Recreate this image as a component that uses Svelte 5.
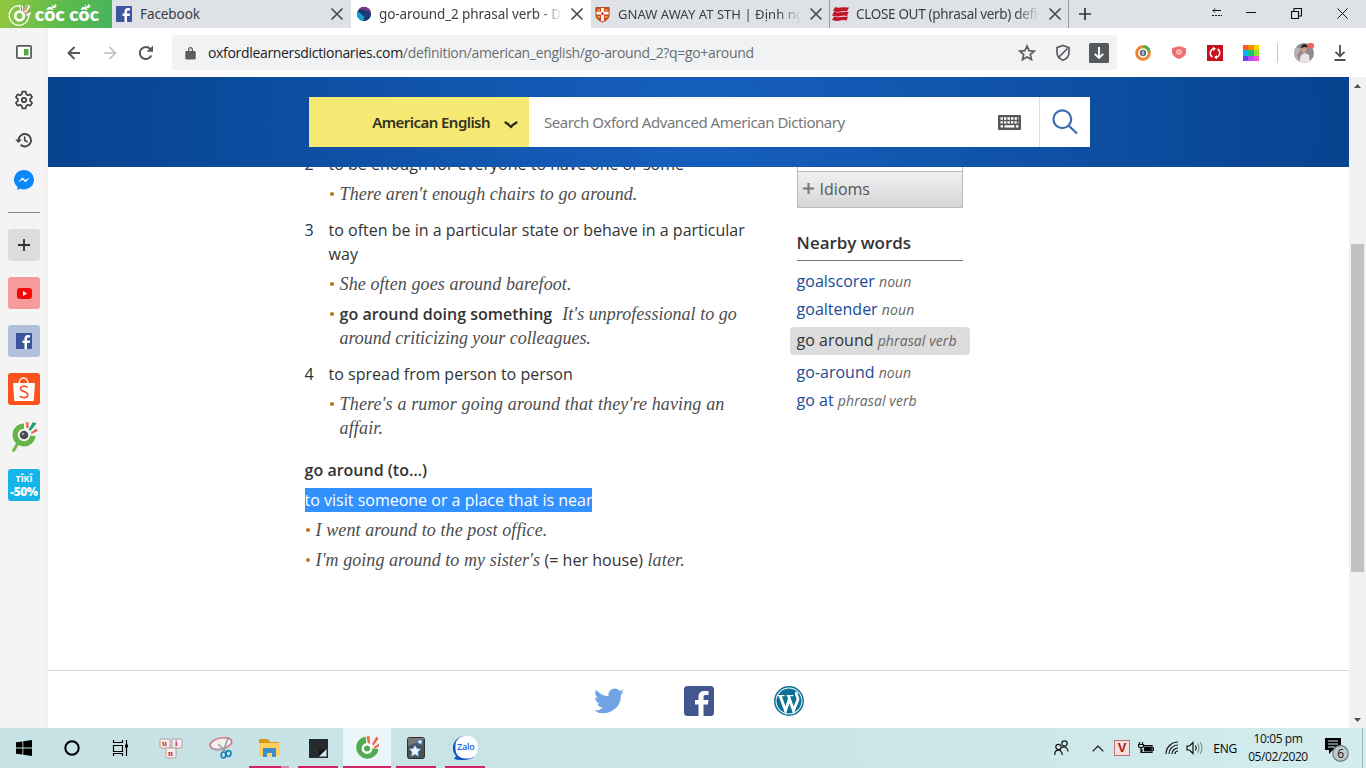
<script>
  const nearby = [
    { word: 'goalscorer', pos: 'noun' },
    { word: 'goaltender', pos: 'noun' },
    { word: 'go around', pos: 'phrasal verb', current: true },
    { word: 'go-around', pos: 'noun' },
    { word: 'go at', pos: 'phrasal verb' }
  ];
  const swatches = ['#ff5a1f', '#ff8a00', '#ffd000', '#00b8f5', '#19c37d', '#8be02c', '#6a3df5', '#b44df5', '#f04de0'];
</script>

{#snippet cross()}
  <svg class="cross" width="14" height="14" viewBox="0 0 14 14"><path d="M1.500 1.500l11 11M12.500 1.500l-11 11" fill="none" stroke="#45474a" stroke-width="1.600" /></svg>
{/snippet}

{#snippet fbmark(size, color)}
  <svg width={size} height={size} viewBox="0 0 32 32"><rect width="32" height="32" rx="1.500" fill={color} /><path d="M17 32V20h-4v-5h4v-4c0-4.500 2.500-7 7-7h4v5h-3c-2 0-3 .8-3 2.600V15h6l-.8 5H22v12z" fill="#fff" /></svg>
{/snippet}

<div class="screen">
  <div class="tabs">
    <div class="brand">
      <svg width="25" height="25" viewBox="0 0 25 25">
        <path d="M13.500 4A9.800 9.800 0 1 0 20.800 13" fill="none" stroke="#fff" stroke-width="1.200" />
        <circle cx="11.500" cy="14" r="4.300" fill="none" stroke="#fff" stroke-width="2.800" />
        <path d="M11 4h4v6h-2zM16 9l3-6 3.500 1-4.500 7zM18 12l4-3 1 3-4 2z" fill="#fff" />
        <path d="M13 4.500l1.200 4.500M19.800 4l-2.600 5M22 9l-3.500 2.500" stroke="#e8644e" stroke-width="1.200" />
      </svg>
      <span>cốc cốc</span>
      <svg class="rays" width="44" height="5" viewBox="0 0 44 5"><path d="M2 1l1.500 3M5.500 0l-.5 4M35 1l1.500 3M38.500 0l-.5 4" stroke="#fff" stroke-width=".9" /></svg>
    </div>
    <div class="tab">{@render fbmark(16, '#3d57a0')}<span class="title w1">Facebook</span>{@render cross()}</div>
    <div class="tab active">
      <svg width="16" height="16" viewBox="0 0 16 16"><circle cx="8" cy="8" r="7" fill="#0e3c70" /><path d="M1.500 5A7 7 0 0 0 7 14.900L8.500 11z" fill="#17a0d0" /><path d="M2.500 3.500A7 7 0 0 1 15 8q-5-5-12.500-4.500z" fill="#7b3580" /><path d="M7 4q6 1 8 4-1 5-6 7z" fill="#1c3a78" /></svg>
      <span class="title w2">go-around_2 phrasal verb - Definition</span>{@render cross()}
    </div>
    <div class="tab">
      <svg width="15" height="17" viewBox="0 0 16 17"><path d="M1 1h14v8c0 4-3 6-7 7.500C4 15 1 13 1 9z" fill="#d9491e" /><path d="M8 1v15M1 7h14" stroke="#fff" stroke-width="3" /><path d="M3 3h2v2H3zM11 3h2v2h-2zM3 10h2v2H3zM11 10h2v2h-2z" fill="#f4b63c" /><path d="M7 6h2v3H7z" fill="#c22" /><path d="M1 1h14v8c0 4-3 6-7 7.500C4 15 1 13 1 9z" fill="none" stroke="#a94a27" /></svg>
      <span class="title w3">GNAW AWAY AT STH | Định nghĩa</span>{@render cross()}
    </div>
    <div class="tab sep last">
      <svg width="17" height="14" viewBox="0 0 17 14"><path d="M3 0q3 1 5 .5T17 .5L15 4.500q-4-1-6.500 0T1 4zM2 4.800q3 1 5.500.5T16.500 5L15 9q-4-1-6.500 0T0 8.500zM2 9.500q3 1 5.500.5t8.500-.3L14.500 13.500q-4-1-6.500 0T0 13z" fill="#c4152b" /></svg>
      <span class="title w4">CLOSE OUT (phrasal verb) definition</span>{@render cross()}
    </div>
    <div class="newtab sep"><svg width="12" height="12" viewBox="0 0 12 12"><path d="M6 0v12M0 6h12" stroke="#333" stroke-width="1.700" /></svg></div>
    <div class="winbtns">
      <svg width="12" height="10" viewBox="0 0 12 10"><path d="M10 2.500H2M4 .5L2 2.500l2 2" fill="none" stroke="#111" /><path d="M1 7.500h10" stroke="#111" stroke-dasharray="2 1" /></svg>
      <svg width="10" height="10" viewBox="0 0 10 10"><path d="M0 4.500h10" stroke="#111" /></svg>
      <svg width="11" height="11" viewBox="0 0 11 11"><path d="M.5 3.500h7v7h-7zM3 3.500V.5h7.500v7.500h-3" fill="none" stroke="#111" stroke-width="1.200" /></svg>
      <svg width="11" height="11" viewBox="0 0 11 11"><path d="M.5.5l10 10M10.500.5l-10 10" stroke="#111" /></svg>
    </div>
  </div>

  <div class="body">
    <aside class="rail">
      <svg class="panel" width="16" height="14" viewBox="0 0 16 14"><rect x=".9" y=".9" width="14.200" height="12.200" rx="1.200" fill="#fff" stroke="#525657" stroke-width="1.700" /><path d="M8 4h4.500v6.500H8z" fill="#4dab40" /></svg>
      <svg class="gear" width="20" height="20" viewBox="0 0 24 24"><path d="M10 2h4l.7 3 2 1.200 3-.9 2 3.400L19.400 11v2l2.300 2.300-2 3.400-3-.9-2 1.200-.7 3h-4l-.7-3-2-1.200-3 .9-2-3.400L4.600 13v-2L2.300 8.700l2-3.400 3 .9 2-1.200z" fill="none" stroke="#424547" stroke-width="2.100" stroke-linejoin="round" /><circle cx="12" cy="12" r="2.600" fill="none" stroke="#424547" stroke-width="2.200" /></svg>
      <svg class="history" width="18" height="16" viewBox="0 0 18 16"><path d="M3.600 8a6.200 6.200 0 1 1 2 4.800" fill="none" stroke="#424547" stroke-width="1.900" /><path d="M.3 7.500h6.500L3.500 11z" fill="#424547" /><path d="M9.700 4.400V8.400l3 1.600" fill="none" stroke="#424547" stroke-width="1.600" /></svg>
      <svg class="msgr" width="20" height="20" viewBox="0 0 20 20"><path d="M10 0a10 9.700 0 1 1-3.500 18.800L3.500 20v-3A10 9.700 0 0 1 10 0z" fill="#0b87f8" /><path d="M4 12.300l4.500-4.800 2.600 2.600L16 7.500l-4.500 4.800-2.700-2.500z" fill="#fff" /></svg>
      <hr />
      <div class="tile plus"><svg width="12" height="12" viewBox="0 0 12 12"><path d="M6 0v12M0 6h12" stroke="#303234" stroke-width="1.800" /></svg></div>
      <div class="tile yt"><svg width="15" height="11" viewBox="0 0 15 11"><rect width="15" height="11" rx="3" fill="#f60808" /><path d="M6 3l4 2.500L6 8z" fill="#fff" /></svg></div>
      <div class="tile fb">{@render fbmark(16, '#3b559c')}</div>
      <div class="tile shop"><svg width="24" height="26" viewBox="0 0 24 26"><path d="M7 8c0-8 9-8 9 0" fill="none" stroke="#fff" stroke-width="1.500" /><path d="M1 7h22l-1.300 18H2.300z" fill="#fff" /><path d="M15.500 11.500c-2-2-7-1.800-7 1.200 0 3.500 7.200 2.200 7.200 6 0 3.500-5.200 3.800-8 1.300" fill="none" stroke="#f25124" stroke-width="1.600" /></svg></div>
      <svg class="cc" width="28" height="33" viewBox="0 0 28 33"><path d="M8 23L3 31.500" stroke="#76b845" stroke-width="3" /><path d="M14 3.500A11.500 11.500 0 1 0 25.500 16L14 15z" fill="#65b44a" /><circle cx="14" cy="15" r="6.200" fill="#f5f5f5" /><path d="M16.500 8l-.5-6 2.500.5V8z" fill="#ef5b43" /><path d="M18.500 9.500L23 2l3.500 1.500L20.500 11z" fill="#25a36e" /><path d="M21 12.500l5.500-4 1 2.500-6 3z" fill="#ef5b43" /><circle cx="14" cy="15" r="4.300" fill="#4b4d52" /><circle cx="13" cy="14" r="1.300" fill="#999" /></svg>
      <div class="tile tiki"><span class="tk">TÎKÎ</span><span class="off">-50%</span></div>
    </aside>

    <section class="browser">
      <div class="toolbar">
        <svg class="nav" width="14" height="14" viewBox="0 0 14 14"><path d="M13 7H2M7.500 1L1.500 7l6 6" fill="none" stroke="#55585b" stroke-width="1.900" /></svg>
        <svg class="nav" width="14" height="14" viewBox="0 0 14 14"><path d="M1 7h11M6.500 1l6 6-6 6" fill="none" stroke="#bcbec0" stroke-width="1.700" /></svg>
        <svg class="reload" width="16" height="16" viewBox="0 0 16 16"><path d="M13.300 10.500A6 6 0 1 1 12.300 4" fill="none" stroke="#55585b" stroke-width="2" /><path d="M15 .5v6.300H8.700z" fill="#55585b" /></svg>
        <div class="address">
          <svg width="11" height="14" viewBox="0 0 11 14"><path d="M1.500 5H3V3.500a2.500 2.500 0 0 1 5 0V5h1.500A1.200 1.200 0 0 1 10.700 6v6.500a1 1 0 0 1-1 1H1.300a1 1 0 0 1-1-1V6a1 1 0 0 1 1.200-1zM4.300 5h2.400V3.500a1.200 1.200 0 0 0-2.400 0z" fill="#5b5e61" /></svg>
          <span class="url"><b>oxfordlearnersdictionaries.com</b>/definition/american_english/go-around_2?q=go+around</span>
          <svg class="star" width="18" height="18" viewBox="0 0 18 18"><path d="M9 2l2.100 4.700 5.100.5-3.900 3.400 1.200 5L9 13l-4.500 2.600 1.200-5-3.900-3.400 5.100-.5z" fill="none" stroke="#5b5e61" stroke-width="1.700" /></svg>
          <svg class="shield" width="16" height="18" viewBox="0 0 16 18"><path d="M8 1.500l6 2.200v5c0 3.500-2.500 6-6 7.600-3.500-1.600-6-4.100-6-7.600v-5zM4 13L12.500 4.500" fill="none" stroke="#5b5e61" stroke-width="1.700" /></svg>
          <svg class="dl" width="20" height="20" viewBox="0 0 20 20"><rect width="20" height="20" rx="1.500" fill="#56595b" /><path d="M10 4v11M5.800 10.800L10 15l4.200-4.200" fill="none" stroke="#fff" stroke-width="1.900" /></svg>
        </div>
        <div class="ext">
          <svg width="16" height="16" viewBox="0 0 16 16"><circle cx="8" cy="8" r="6.300" fill="none" stroke="#f0852d" stroke-width="3" /><path d="M8.500 1.500a6.400 6.400 0 0 1 5.700 5" fill="none" stroke="#4caf50" stroke-width="3" /><circle cx="8" cy="8" r="3.200" fill="#5b7185" /><path d="M8 6v4" stroke="#fff" /></svg>
          <svg width="14" height="13" viewBox="0 0 14 15" preserveAspectRatio="none"><path d="M7 0l7 2.500v4.500c0 4-3 6.500-7 8-4-1.500-7-4-7-8V2.500z" fill="#ee6f72" /><circle cx="7" cy="7" r="2.500" fill="none" stroke="#fff" stroke-width=".9" /><path d="M5.300 5.300l3.400 3.400" stroke="#fff" stroke-width=".9" /></svg>
          <svg width="16" height="16" viewBox="0 0 16 16"><rect width="16" height="16" fill="#c9101c" /><path d="M5.500 12A4.600 4.600 0 0 1 6.500 3.700M10.500 4a4.600 4.600 0 0 1-1 8.300" fill="none" stroke="#fff" stroke-width="1.500" /><path d="M6 1.500l3 2.300-3 2.300zM10 10l-3 2.300 3 2.300z" fill="#fff" /></svg>
          <div class="swatches">{#each swatches as c}<i style="background:{c}"></i>{/each}</div>
          <span class="divider"></span>
          <svg class="avatar" width="20" height="20" viewBox="0 0 20 20"><defs><clipPath id="face"><circle cx="10" cy="10" r="10" /></clipPath></defs><g clip-path="url(#face)"><rect width="20" height="20" fill="#918b8d" /><path d="M0 3l7 3-4 6 3 8H0z" fill="#b9b3b6" /><path d="M5 20l2-8 4-2 4 2 1 8z" fill="#e9e5e4" /><ellipse cx="10" cy="6.500" rx="2.500" ry="3.500" fill="#c99f8c" /><path d="M7 5c0-5 7-5 6.500-.5L11 4z" fill="#23201f" /></g><rect x="13.500" y="0" width="6.500" height="5.500" rx="2" fill="#ee6464" /></svg>
          <svg class="tray" width="12" height="16" viewBox="0 0 12 16"><path d="M6 0v11M1.500 6.800L6 11.300l4.500-4.500M.5 15h11" fill="none" stroke="#4c4f52" stroke-width="1.800" /></svg>
        </div>
      </div>

      <div class="viewport">
        <div class="page">
          <header>
            <div class="search">
              <div class="dict"><span>American English</span><svg width="14" height="8" viewBox="0 0 14 8"><path d="M1.500 1.500q3.500 2 5.500 4.500 2-2.500 5.500-4.500" fill="none" stroke="#2b2b20" stroke-width="2.300" stroke-linecap="round" stroke-linejoin="round" /></svg></div>
              <div class="field">
                <span>Search Oxford Advanced American Dictionary</span>
                <svg width="23" height="15" viewBox="0 0 23 15"><rect width="23" height="15" rx="1" fill="#575757" /><path d="M2.500 3.500h18M2.500 7.300h18" stroke="#fff" stroke-width="2.300" stroke-dasharray="2.400 1.100" /><path d="M2.500 11.300h2.500M6.500 11.300h10M18 11.300h2.500" stroke="#fff" stroke-width="2.200" /></svg>
              </div>
              <div class="go"><svg width="26" height="26" viewBox="0 0 26 26"><circle cx="10.300" cy="10.300" r="8.900" fill="none" stroke="#3c6cb0" stroke-width="2.200" /><path d="M16.500 16.500l8.500 8" stroke="#3c6cb0" stroke-width="2.400" /></svg></div>
            </div>
          </header>

          <div class="content">
            <article>
              <ol>
                <li><span class="num">2</span>
                  <div><p class="def">to be enough for everyone to have one or some</p>
                    <p class="ex"><em class="e1">There aren't enough chairs to go around.</em></p></div></li>
                <li><span class="num">3</span>
                  <div><p class="def">to often be in a particular state or behave in a particular<br />way</p>
                    <p class="ex"><em class="e2">She often goes around barefoot.</em></p>
                    <p class="ex"><strong>go around doing something</strong><em class="e3">It's unprofessional to go</em><br /><em class="e4">around criticizing your colleagues.</em></p></div></li>
                <li><span class="num">4</span>
                  <div><p class="def">to spread from person to person</p>
                    <p class="ex"><em class="e5">There's a rumor going around that they're having an</em><br /><em class="e5">affair.</em></p></div></li>
              </ol>
              <h3>go around (to…)</h3>
              <p class="picked"><mark>to visit someone or a place that is near</mark></p>
              <p class="ex"><em class="e6">I went around to the post office.</em></p>
              <p class="ex"><em class="e7">I'm going around to my sister's</em> <span class="gloss">(= her house)</span> <em class="e5">later.</em></p>
            </article>

            <nav>
              <div class="accordion"><div class="prev"></div><div class="idioms"><svg width="11" height="11" viewBox="0 0 11 11"><path d="M5.500 0v11M0 5.500h11" stroke="#777" stroke-width="2.100" /></svg>Idioms</div></div>
              <h4>Nearby words</h4>
              <ul>
                {#each nearby as n}
                  <li class:current={n.current}><span class="word">{n.word}</span> <i>{n.pos}</i></li>
                {/each}
              </ul>
            </nav>
          </div>

          <footer>
            <svg width="30" height="26" viewBox="0 0 24 20"><path d="M24 2.400a10 10 0 0 1-2.800.8 5 5 0 0 0 2.100-2.700 10 10 0 0 1-3.100 1.200 4.900 4.900 0 0 0-8.400 4.500A14 14 0 0 1 1.700 1a4.900 4.900 0 0 0 1.500 6.600A5 5 0 0 1 1 7v.1a4.900 4.900 0 0 0 3.900 4.800 5 5 0 0 1-2.200.1 4.900 4.900 0 0 0 4.600 3.400A9.900 9.900 0 0 1 0 17.500 14 14 0 0 0 21.500 5z" fill="#6fa3e4" /></svg>
            <svg width="30" height="30" viewBox="0 0 30 30"><rect width="30" height="30" rx="3.500" fill="#44568f" /><path d="M14.500 30V18.500H11V14h3.500v-3.500C14.500 7 17 5 20 5h4.500v4H22c-1.700 0-2.500.7-2.500 2.200V14h5l-.6 4.500h-4.400V30z" fill="#fff" /></svg>
            <svg width="30" height="30" viewBox="0 0 30 30"><circle cx="15" cy="15" r="14.200" fill="#fff" stroke="#0b7095" stroke-width="1.500" /><circle cx="15" cy="15" r="12.500" fill="#0b7095" /><path d="M3.500 9.700h7M12.500 9.700h7" stroke="#fff" stroke-width="1.300" /><path d="M6.200 10l5.300 14.500L15.500 13M14.500 10l5 14.500L23.800 14c1-3.500-2.800-4.500-1.300-8" fill="none" stroke="#fff" stroke-width="2.900" /></svg>
          </footer>
        </div>
        <div class="scroll"><svg width="7" height="4" viewBox="0 0 7 4"><path d="M0 4l3.500-4L7 4z" fill="#505050" /></svg><div class="thumb"></div><svg width="7" height="4" viewBox="0 0 7 4"><path d="M0 0l3.500 4L7 0z" fill="#505050" /></svg></div>
      </div>
    </section>
  </div>

  <div class="taskbar">
    <div class="slot"><svg width="16" height="16" viewBox="0 0 16 16"><path d="M0 2.300l6.500-.9v6.200H0zM7.300 1.300L16 0v7.600H7.300zM0 8.400h6.500v6.200L0 13.700zM7.300 8.400H16V16l-8.700-1.300z" fill="#000" /></svg></div>
    <div class="slot ring"><svg width="16" height="16" viewBox="0 0 16 16"><circle cx="8" cy="8" r="6.700" fill="none" stroke="#000" stroke-width="2" /></svg></div>
    <div class="slot views"><svg width="17" height="16" viewBox="0 0 17 16"><path d="M1.500 0v2.500h9V0M1.500 5.500h9v6h-9zM1.500 16v-2.500h9V16M14.500 0v16" fill="none" stroke="#000" stroke-width="1.200" /><path d="M13 4.500h3v3h-3z" /></svg></div>
    <div class="slot"><svg width="25" height="21" viewBox="0 0 25 21"><g fill="#f7eeee" stroke="#ad8e90" stroke-width=".8"><rect x="1" y="1" width="10" height="9" rx="1" /><rect x="13" y="1" width="10" height="9" rx="1" /><rect x="7" y="10" width="10" height="10" rx="1" /></g><g class="keys"><text x="3" y="8">u</text><text x="16" y="8">i</text><text x="9" y="17.500">n</text></g></svg></div>
    <div class="slot"><svg width="25" height="24" viewBox="0 0 25 24"><ellipse cx="13" cy="7.500" rx="11" ry="5.500" fill="#f3f0f1" stroke="#d5727c" stroke-width="1.500" transform="rotate(-12 13 8)" /><path d="M3 12q8 4 13 0" stroke="#aaa" fill="none" stroke-width="2" /><path d="M20 2l-5 14M10 8l9 8" stroke="#9b9ca1" stroke-width="1.500" /><ellipse cx="15.500" cy="19" rx="2.300" ry="3" fill="none" stroke="#1687b7" stroke-width="1.700" /><ellipse cx="20.500" cy="17.500" rx="2.400" ry="2.800" fill="none" stroke="#1687b7" stroke-width="1.700" /></svg></div>
    <div class="slot run more"><svg width="23" height="20" viewBox="0 0 23 20"><path d="M1 1h9l2 3h9v14H1z" fill="#d99a16" /><path d="M1 5h21v13H1z" fill="#ffd15c" /><path d="M5 10h13v9h-4v-4h-5v4H5z" fill="#3b8dcc" /></svg></div>
    <div class="slot run"><svg width="19" height="19" viewBox="0 0 19 19"><path d="M0 0h19v19H0z" fill="#262b2d" /><path d="M10 17.500l7.500-7.500v7.500z" fill="#d6e9ea" /><path d="M10 17V10.500h7z" fill="#14181a" /></svg></div>
    <div class="slot run on"><svg width="25" height="24" viewBox="0 0 25 24"><path d="M10.500 1.500A11.200 11.200 0 1 0 23.500 14L12 13z" fill="#4fab4e" /><path d="M11.500 1.500l3-.5.5 8-2 0zM17 9l4.500-7.500 2 2-5 7zM19 12l5-3.500v3l-5 2.500z" fill="#f06845" /><circle cx="12" cy="13.500" r="4.200" fill="#4fab4e" stroke="#fff" stroke-width="2.400" /></svg></div>
    <div class="slot run"><svg width="18" height="22" viewBox="0 0 18 22"><rect x=".5" y=".5" width="17" height="21" rx="2" fill="#50504f" stroke="#2f3030" /><path d="M1 9q8-2 16-7v-1H1z" fill="#777" /><path d="M8 8l2 3.500 4 .5-3 3 .7 4.500L8 17.500l-4 2 1-4.500-3-3 4-.5zM13 2l1 1.800 2 .2-1.500 1.500.5 2-2-1-2 1 .5-2L10 4l2-.2z" fill="#e9f6ff" stroke="#3a8edb" stroke-width=".8" /></svg></div>
    <div class="slot run"><svg width="25" height="24" viewBox="0 0 25 24"><path d="M12 0A12 12 0 0 0 3 20l-2 3q13 3 20-2" fill="#1455c9" /><rect x="2.500" y="0" width="22" height="22.500" rx="9" fill="#fff" /><text class="zalo" x="4" y="14">Zalo</text></svg></div>
    <div class="systray">
      <svg class="people" width="15" height="16" viewBox="0 0 15 16"><circle cx="10.500" cy="3.500" r="2.700" /><circle cx="4.500" cy="7" r="2.700" /><path d="M.7 15c0-6.500 7.500-6.500 7.500 0M8 7.500c3-1.500 6 .5 6 4" /></svg>
      <svg class="chev" width="12" height="7" viewBox="0 0 12 7"><path d="M.7 6.300L6 1l5.300 5.300" /></svg>
      <div class="vkey">V</div>
      <svg class="bat" width="16" height="12" viewBox="0 0 16 12"><path d="M5 3.500h9v7H4V7M1.500 0v2M4.500 0v2M.5 2.500h5v2q-2.500 2.500-5 0zM3 6v5M15.500 5v4" /><path d="M6.500 5H13v4H6.500z" fill="#000" /></svg>
      <svg class="wifi" width="14" height="14" viewBox="0 0 14 14"><path d="M1 13A12 12 0 0 1 13 1M4 13a9 9 0 0 1 9-9M7 13a6 6 0 0 1 6-6M10 13a3 3 0 0 1 3-3" /></svg>
      <svg class="vol" width="17" height="14" viewBox="0 0 17 14"><path d="M1 5h2.500L7 1.500v11L3.500 9H1zM9.500 4.500q1.500 2.500 0 5" /><path d="M11.500 2.500q3 4.500 0 9M14 1q4 6 0 12" stroke="#7d9799" /></svg>
      <span class="lang">ENG</span>
      <div class="clock"><span>10:05 pm</span><span>05/02/2020</span></div>
      <svg class="note" width="24" height="24" viewBox="0 0 24 24"><path d="M0 0h16v12H8l-4 4v-4H0z" fill="#000" /><path d="M3 3h10M3 6h10M3 9h7" stroke="#cfe8ea" stroke-width="1.200" /><circle cx="15.500" cy="15.500" r="7.800" fill="#bfcacc" stroke="#6e7d80" /><text x="12.200" y="19.500">6</text></svg>
    </div>
    <div class="peek"></div>
  </div>
</div>

<style>
  :global(body) { margin: 0; overflow: hidden; }
  .screen { width: 1366px; height: 768px; display: flex; flex-direction: column; font-family: "Open Sans", "Noto Sans", sans-serif; overflow: hidden; background: #fff; }
  svg { display: block; flex: none; }
  p, h3, h4, ol, ul { margin: 0; padding: 0; font-weight: 400; list-style: none; }

  .tabs { height: 28px; flex: none; display: flex; background: #dee1e6; color: #3c4043; }
  .brand { position: relative; width: 112px; box-sizing: border-box; padding-left: 8px; display: flex; align-items: center; gap: 2px; background: linear-gradient(100deg, #92c83e, #5bb950 60%, #45b45e); color: #fff; }
  .brand span { font: 800 19px/30px Lato, sans-serif; letter-spacing: .15px; white-space: nowrap; }
  .rays { position: absolute; left: 50px; top: 4px; }
  .tab { width: 239px; box-sizing: border-box; padding: 0 7px 0 4px; display: flex; align-items: center; gap: 8px; }
  .tab.active { width: 240px; background: #fff; padding-left: 5px; }
  .tab.active svg:first-child { margin-right: -1px; }
  .tab .cross { margin-left: auto; }
  .title { width: 182px; font: 13.500px/28px "Noto Sans", sans-serif; white-space: nowrap; overflow: hidden; }
  .w2, .w3, .w4 { mask-image: linear-gradient(90deg, #000 160px, transparent 184px); }
  .w1, .w2 { letter-spacing: -.08px; }
  .w3 { font-size: 13px; letter-spacing: .05px; }
  .w4 { font-size: 13.500px; letter-spacing: -.32px; }
  .sep { border-left: 1px solid #96999d; margin-left: -1px; }
  .last { width: 240px; gap: 7px; padding-left: 2px; }
  .newtab { width: 32px; display: flex; align-items: center; justify-content: center; }
  .winbtns { margin-left: auto; padding: 0 18px 2px 0; display: flex; align-items: center; gap: 35px; }
  .winbtns svg:first-child { margin-right: -12px; }

  .body { flex: none; height: 700px; display: flex; }
  .rail { width: 48px; flex: none; display: flex; flex-direction: column; align-items: center; background: linear-gradient(90deg, #f4f4f4 42px, #eee); }
  .panel { margin-top: 17px; }
  .gear { margin-top: 31px; }
  .history { margin-top: 22px; }
  .msgr { margin-top: 22px; }
  .rail hr { width: 32px; height: 1px; border: 0; background: #858585; margin: 22px 0 16px; }
  .tile { width: 32px; height: 32px; flex: none; margin-bottom: 16px; border-radius: 3px; display: flex; align-items: center; justify-content: center; }
  .plus { background: #dddcda; }
  .yt { background: #f69b9b; }
  .fb { background: #b2c0de; }
  .shop { background: #fa541c; margin-bottom: 15px; }
  .cc { margin-bottom: 16px; }
  .tiki { background: #13b5ea; color: #fff; flex-direction: column; }
  .tk { font: 700 9px/13px "Open Sans", sans-serif; }
  .off { font: 800 12px/13px "Open Sans", sans-serif; letter-spacing: -.5px; }

  .browser { flex: 1; display: flex; flex-direction: column; }
  .toolbar { height: 49px; flex: none; display: flex; align-items: center; padding-left: 19px; }
  .nav { margin-right: 22px; }
  .reload { margin-right: 18px; margin-left: -1px; }
  .address { width: 945px; height: 35px; box-sizing: border-box; padding: 0 8px 0 13px; border-radius: 3px; background: #f1f2f3; display: flex; align-items: center; }
  .url { margin-left: 12px; font-size: 14px; letter-spacing: -.325px; color: #6a6d70; white-space: nowrap; }
  .url b { font-weight: 400; color: #202124; }
  .star { margin-left: auto; }
  .shield { margin: 0 18px 0 19px; }
  .ext { flex: 1; display: flex; align-items: center; padding-left: 18px; }
  .ext > svg:nth-child(2) { margin: 0 21px; }
  .swatches { width: 16px; height: 16px; margin-left: 20px; display: grid; grid-template-columns: 5px 6px 5px; grid-template-rows: 5px 6px 5px; }
  .divider { width: 1px; height: 20px; background: #c5c7ca; margin: 0 16px 0 18px; }
  .avatar { margin-right: 20px; }

  .viewport { height: 651px; display: flex; }
  .page { width: 1301px; height: 651px; display: flex; flex-direction: column; overflow: hidden; }
  header { position: relative; height: 90px; flex: none; box-sizing: border-box; padding: 20px 0 0 261px; background: radial-gradient(ellipse 650px 500px at 50% 50%, #1760bf, #07438f); }
  .search { width: 781px; height: 50px; display: flex; background: #fff; }
  .dict { width: 220px; box-sizing: border-box; padding-right: 11px; background: #f6e973; display: flex; align-items: center; justify-content: flex-end; gap: 14px; color: #33321f; font: 600 15px "Noto Sans", sans-serif; letter-spacing: -.55px; }
  .dict svg { margin-top: 5px; }
  .field { width: 511px; box-sizing: border-box; padding: 0 18px 0 15px; display: flex; align-items: center; justify-content: space-between; border-right: 1px solid #ddd; color: #777; font: 15px "Noto Sans", sans-serif; letter-spacing: -.46px; }
  .go { flex: 1; display: flex; align-items: center; justify-content: center; }

  .content { height: 503px; flex: none; display: flex; padding-left: 256.600px; color: #333; font-size: 16px; line-height: 24px; white-space: nowrap; }
  article { width: 492px; flex: none; margin-top: -15px; }
  article li { display: flex; margin-bottom: 12px; }
  .num { width: 24px; flex: none; color: #234; }
  .ex { position: relative; margin-top: 6px; padding-left: 11px; font-family: "Liberation Serif", serif; font-size: 18px; color: #4d4d4d; }
  .ex::before { content: ''; position: absolute; left: 1px; top: 10px; width: 4px; height: 4px; border-radius: 50%; background: #bd7615; }
  .ex strong { font: 600 16px/24px "Open Sans", sans-serif; color: #333; margin-right: 10px; }
  .e1, .e7 { letter-spacing: .06px; }
  .e2, .e6 { letter-spacing: .09px; }
  .e3 { letter-spacing: .04px; }
  .e4 { letter-spacing: -.03px; }
  .e5 { letter-spacing: .14px; }
  .gloss { font: 16px/24px "Open Sans", sans-serif; color: #333; letter-spacing: .03px; }
  h3 { margin-top: 18px; font: 600 16px/24px "Open Sans", sans-serif; }
  .picked { margin-top: 6px; }
  mark { display: inline-block; height: 24px; background: #3390ff; color: #fff; }

  nav { width: 180px; }
  .accordion { width: 166px; }
  .prev { height: 4px; border: solid #bbb; border-width: 0 1px; }
  .idioms { height: 37px; box-sizing: border-box; border: 1px solid #bbb; padding: 0 0 2px 5px; display: flex; align-items: center; gap: 6px; background: linear-gradient(#f1f1f1, #d5d5d5); color: #555; }
  h4 { width: 166px; margin-top: 23px; height: 29px; border-bottom: 1px solid #777; font: 600 17px/24px "Open Sans", sans-serif; letter-spacing: -.03px; }
  ul { margin-top: 6px; }
  ul li { height: 28px; line-height: 28px; }
  .word { color: #194a97; }
  ul i { font-size: 14px; letter-spacing: .1px; color: #666; }
  .current { margin: 4px 0 3px -7px; width: 173px; padding-left: 7px; border-radius: 4px; line-height: 26px; background: #dcdcdc; }
  .current .word { color: #333; }
  footer { height: 57px; border-top: 1px solid #d9d9d9; display: flex; justify-content: center; align-items: center; gap: 60px; padding-top: 2px; }

  .scroll { width: 17px; box-sizing: border-box; padding: 7px 0 6px; background: #f1f1f1; display: flex; flex-direction: column; align-items: center; }
  .thumb { width: 13px; height: 328px; margin: 156px 0 auto; background: #c1c1c1; }

  .taskbar { height: 40px; flex: none; display: flex; background: linear-gradient(90deg, #c6e2e5, #cae5e8 60%, #d3eced); }
  .slot { width: 48px; height: 40px; box-sizing: border-box; margin-right: 1px; display: flex; align-items: center; justify-content: center; }
  .ring { padding-right: 2px; }
  .views { padding-right: 4px; }
  .run { background: linear-gradient(#d02464, #d02464) 50% 100% / 40px 2px no-repeat; }
  .more { background-image: linear-gradient(90deg, #d02464 80%, #d985a8 80%); }
  .on { background: #eaf6f7; border-bottom: 2px solid #d02464; }
  .keys text { font: 700 9px "Liberation Serif", serif; fill: #cb2831; }
  .zalo { font: 600 9px "Open Sans", sans-serif; letter-spacing: -.2px; fill: #1764da; }
  .systray { margin-left: auto; display: flex; align-items: center; padding-right: 13px; }
  .systray svg { fill: none; stroke: #111; stroke-width: 1.200; }
  .chev { margin-left: 23px; }
  .vkey { width: 16px; height: 16px; margin-left: 10px; box-sizing: border-box; border: 1px solid #ba6f70; background: #f8dddd; color: #a81c20; font: 700 13px/14px "Liberation Sans", sans-serif; text-align: center; }
  .bat { margin-left: 8px; }
  .wifi { margin-left: 11px; }
  .vol { margin-left: 7px; }
  .lang { margin-left: 10px; font-size: 12px; letter-spacing: -.2px; }
  .clock { width: 60px; margin: 0 17px 0 11px; display: flex; flex-direction: column; align-items: center; font-size: 12px; line-height: 18px; letter-spacing: -.4px; color: #111; }
  .systray .note { stroke: none; margin-top: 3px; }
  .note text { font: 12px "Open Sans", sans-serif; fill: #111; }
  .peek { width: 4px; box-sizing: border-box; border-left: 1px solid #9fb5b8; }
</style>
